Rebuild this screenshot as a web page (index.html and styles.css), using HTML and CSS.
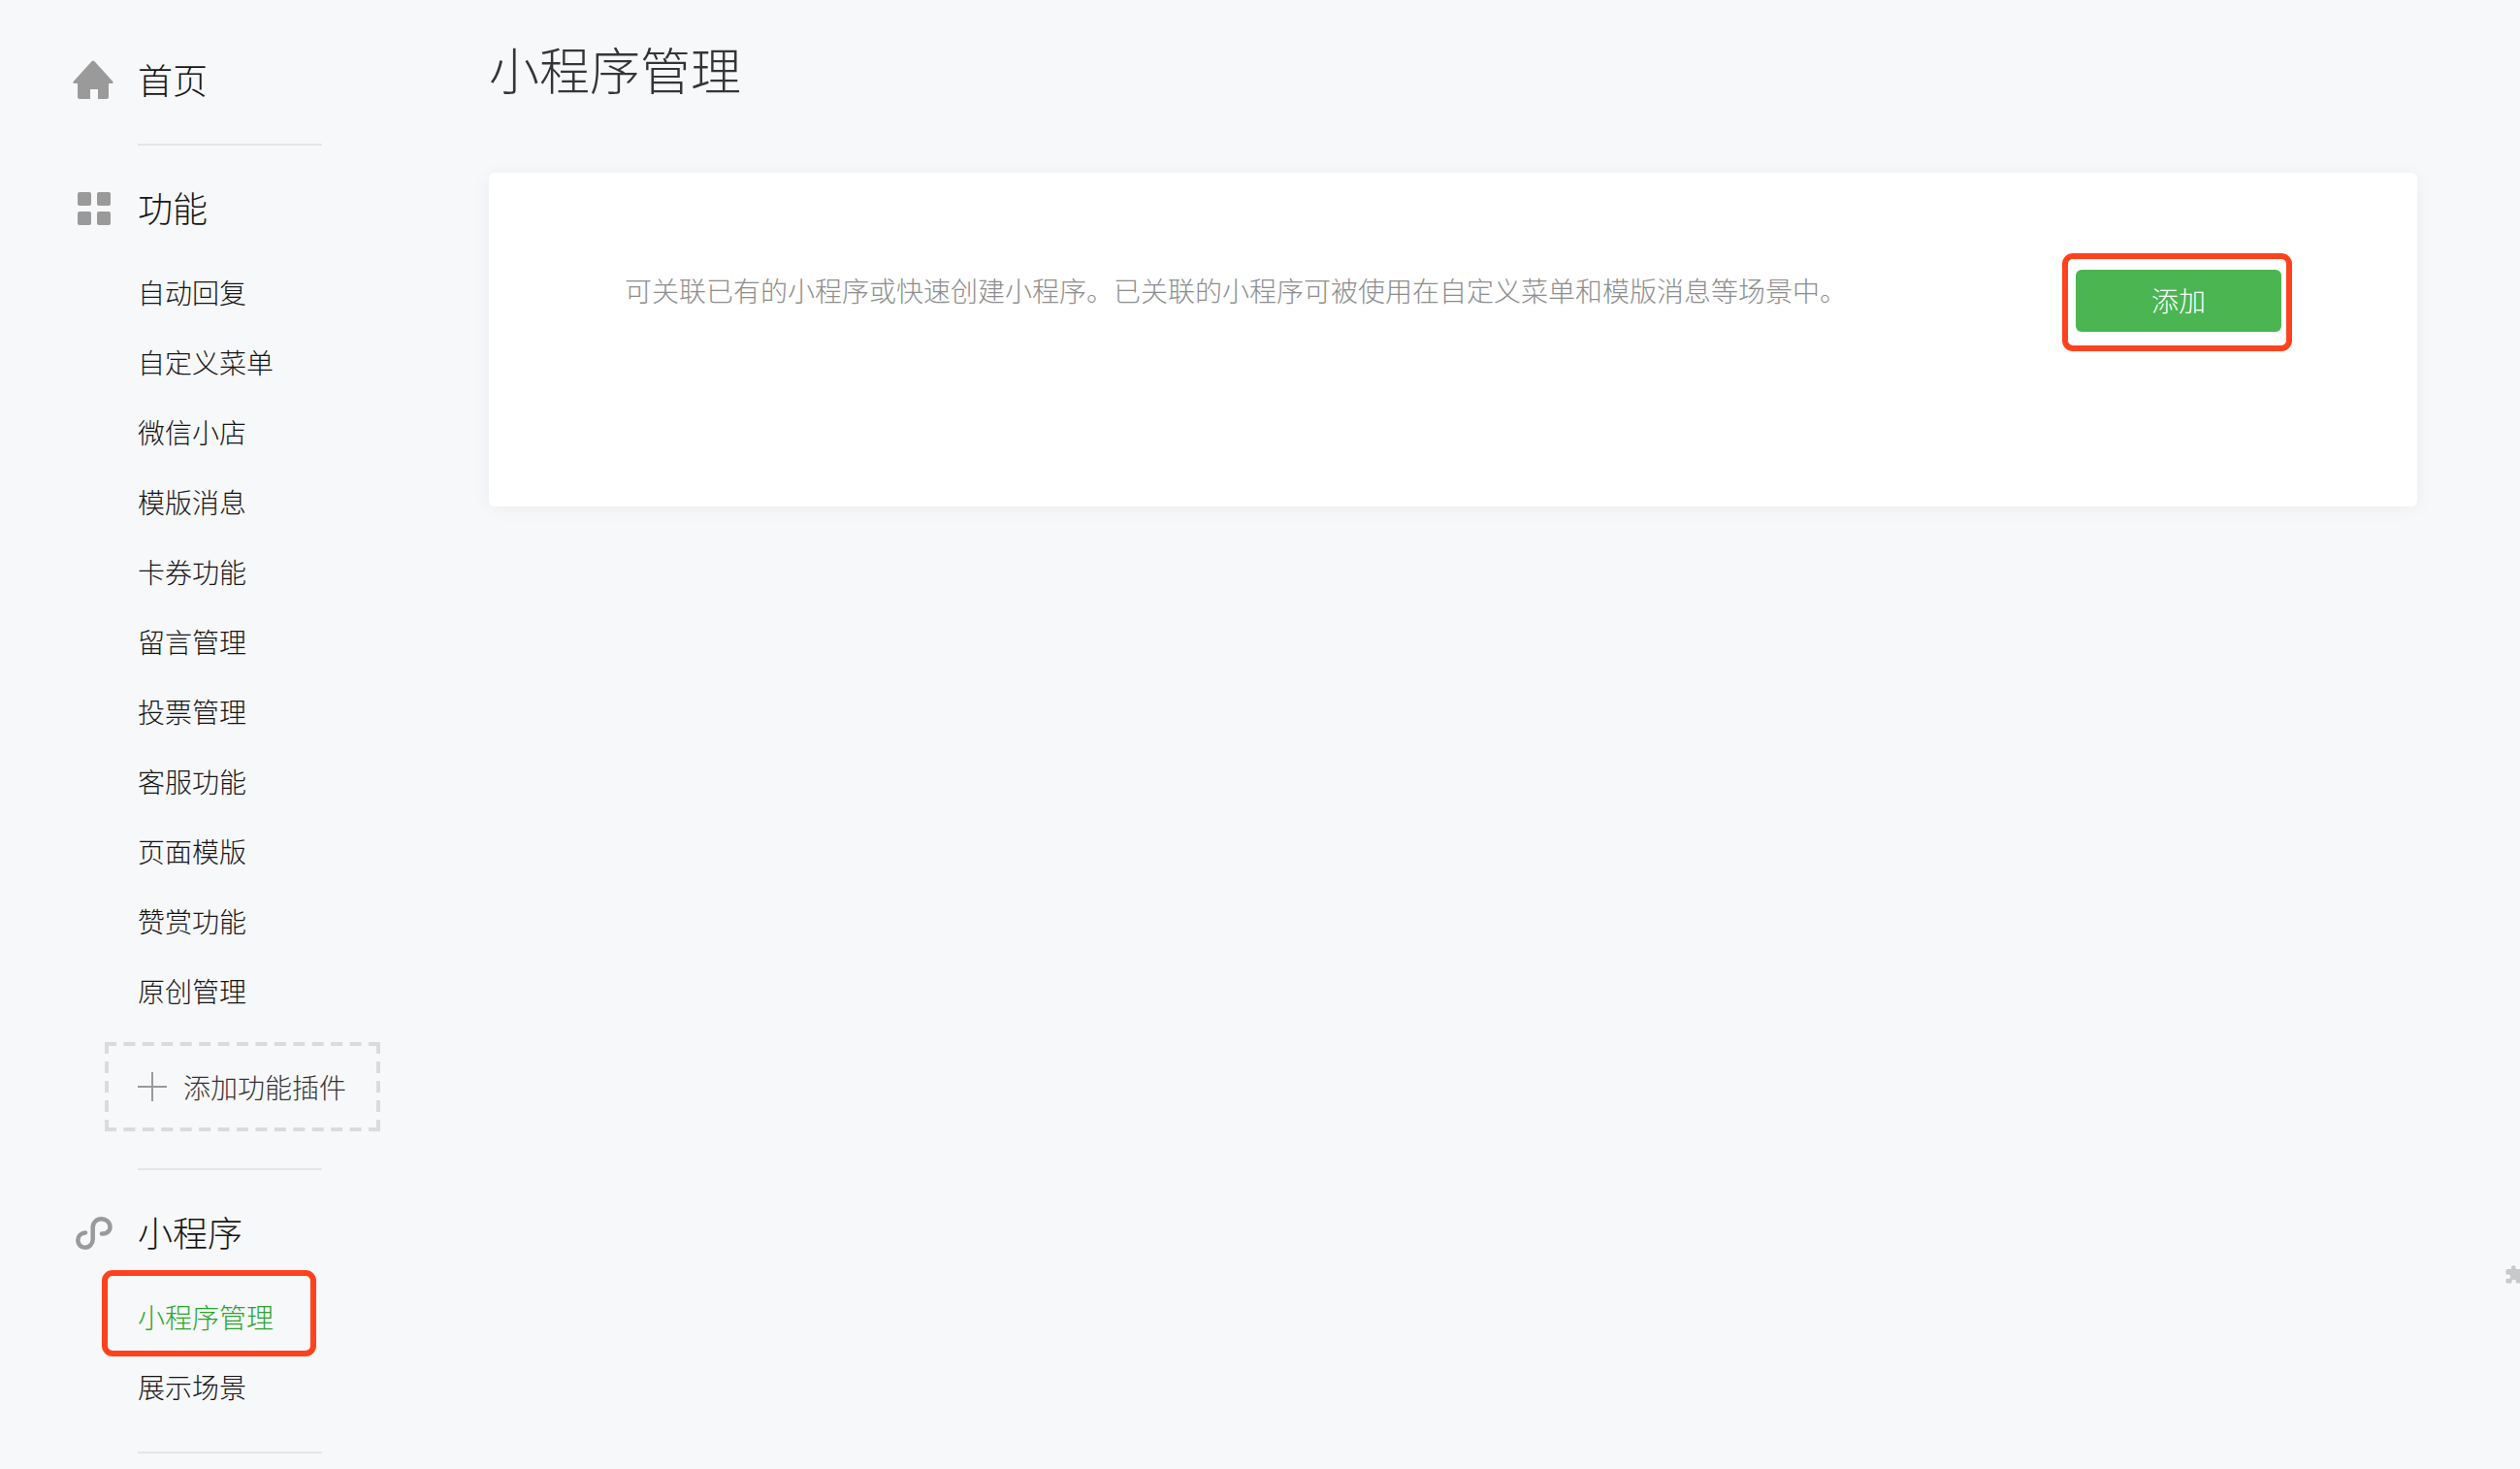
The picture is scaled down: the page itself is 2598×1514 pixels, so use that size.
FILE: index.html
```html
<!DOCTYPE html>
<html lang="zh-CN">
<head>
  <meta charset="utf-8">
  <meta name="viewport" content="width=device-width, initial-scale=1">
  <title>小程序管理</title>
  <link rel="stylesheet" href="styles.css">
</head>
<body>
  <div class="layout">
    <nav class="sidebar">
      <h2 class="menu-title">
        <svg class="menu-icon" viewBox="0 0 42 42" aria-hidden="true"><path fill="currentColor" d="M19.5 1.2q1.5-1.4 3 0L41.3 22q1 1.8-1 2H37v14q0 2-2 2h-9V30h-8v10H7q-2 0-2-2V24H1.700q-2-.2-1-2z"/></svg>
        <a href="#home">首页</a>
      </h2>
      <hr class="divider">
      <h2 class="menu-title">
        <svg class="menu-icon" viewBox="0 0 42 42" aria-hidden="true"><g fill="currentColor"><rect x="5" y="4" width="14" height="14" rx="2"/><rect x="25" y="4" width="14" height="14" rx="2"/><rect x="5" y="24" width="14" height="14" rx="2"/><rect x="25" y="24" width="14" height="14" rx="2"/></g></svg>
        功能
      </h2>
      <ul class="menu-list">
        <li><a href="#reply">自动回复</a></li>
        <li><a href="#menu">自定义菜单</a></li>
        <li><a href="#shop">微信小店</a></li>
        <li><a href="#template">模版消息</a></li>
        <li><a href="#coupon">卡券功能</a></li>
        <li><a href="#comment">留言管理</a></li>
        <li><a href="#vote">投票管理</a></li>
        <li><a href="#service">客服功能</a></li>
        <li><a href="#page">页面模版</a></li>
        <li><a href="#reward">赞赏功能</a></li>
        <li><a href="#original">原创管理</a></li>
      </ul>
      <a class="add-plugin" href="#plugins">
        <svg class="dashes" aria-hidden="true"><line class="dash-x" x1="0" y1="2" x2="100%" y2="2"/><line class="dash-x" x1="0" y1="90" x2="100%" y2="90"/><line class="dash-y" x1="2" y1="0" x2="2" y2="92"/><line class="dash-y" x1="282" y1="0" x2="282" y2="92"/></svg>
        <svg class="plus" viewBox="0 0 30 30" aria-hidden="true"><path d="M15 0v30M0 15h30" stroke="currentColor" stroke-width="2"/></svg>
        添加功能插件
      </a>
      <hr class="divider divider-after-box">
      <h2 class="menu-title">
        <svg class="menu-icon" viewBox="0 0 42 42" aria-hidden="true"><path fill="none" stroke="currentColor" stroke-width="4.500" stroke-linecap="round" d="M30 21.500C35 22 38.500 18.500 38.500 14.500C38.500 10 34.500 6.200 29.500 6.200C24.500 6.200 20.700 10 20.700 15V27C20.700 32 17 35.800 12.700 35.800C8.500 35.800 5.300 32.500 5.300 28.300C5.300 24 8.500 20.800 13 20.500"/></svg>
        小程序
      </h2>
      <ul class="menu-list">
        <li class="current"><a href="#miniprogram" aria-current="page">小程序管理</a></li>
        <li><a href="#scene">展示场景</a></li>
      </ul>
      <hr class="divider divider-last">
    </nav>
    <main class="content">
      <h1 class="page-title">小程序管理</h1>
      <section class="card">
        <p class="card-text">可关联已有的小程序或快速创建小程序。已关联的小程序可被使用在自定义菜单和模版消息等场景中。</p>
        <div class="action"><button class="add-button" type="button">添加</button></div>
      </section>
    </main>
  </div>
  <div class="edge-tool" aria-hidden="true">
    <svg class="puzzle" viewBox="0 0 20 20"><path fill="currentColor" d="M2 4h4V2.500a2.300 2.300 0 0 1 4.600 0V4H16v5h2v5h-2v4.500h-5V17a2.300 2.300 0 0 0-4.600 0v1.500H1.500q-1 0-1-1V14H3a2.300 2.300 0 0 0 0-4.600H.5V5.500Q.5 4 2 4z"/></svg>
  </div>
</body>
</html>
```
FILE: styles.css
```css
*,
*::before,
*::after {
  box-sizing: border-box;
}

body {
  margin: 0;
  background: #f7f8fa;
  color: #161616;
  font-family: "Noto Sans CJK SC", sans-serif;
  font-size: 28px;
  font-weight: 300;
}

a {
  color: inherit;
  text-decoration: none;
}

.layout {
  display: flex;
}

.sidebar {
  flex: none;
  width: 504px;
  padding: 53px 0 16px;
}

.menu-title {
  display: flex;
  align-items: flex-start;
  gap: 25px;
  margin: 0;
  padding: 0 0 4px 75px;
  font-size: 36px;
  font-weight: 300;
  line-height: 56px;
}

.menu-icon {
  width: 42px;
  height: 42px;
  margin-top: 9px;
  color: #9a9a9a;
}

.divider {
  width: 190px;
  height: 2px;
  margin: 35px 0 35px 142px;
  border: 0;
  background: #e4e5e7;
}

.divider-after-box {
  margin-top: 38px;
}

.divider-last {
  margin-top: 31px;
  margin-bottom: 0;
}

.menu-list {
  margin: 20px 0 0;
  padding: 0 0 0 142px;
  list-style: none;
  line-height: 72px;
}

.current {
  position: relative;
  color: #2ba52b;
}

.current::after {
  content: "";
  position: absolute;
  top: -12px;
  left: -37px;
  width: 221px;
  height: 89px;
  border: 6px solid #ff421d;
  border-radius: 11px;
  pointer-events: none;
}

.add-plugin {
  position: relative;
  display: flex;
  align-items: center;
  gap: 17px;
  width: 284px;
  height: 92px;
  margin: 17px 0 0 108px;
  padding-left: 34px;
  color: #353535;
}

.dashes {
  position: absolute;
  inset: 0;
  width: 100%;
  height: 100%;
  stroke: #dadbdc;
  stroke-width: 4;
}

.dash-x {
  stroke-dasharray: 12 7.430;
}

.dash-y {
  stroke-dasharray: 12 8;
}

.plus {
  width: 30px;
  height: 30px;
  color: #9a9a9a;
}

.content {
  flex: 1;
  min-width: 0;
  padding: 31px 106px 0 0;
}

.page-title {
  margin: 0;
  color: #353535;
  font-size: 52px;
  font-weight: 300;
  line-height: 80px;
}

.card {
  display: flex;
  align-items: flex-start;
  justify-content: space-between;
  gap: 40px;
  min-height: 344px;
  margin-top: 67px;
  padding: 100px 140px;
  background: #fff;
  border-radius: 6px;
  box-shadow: 0 2px 20px rgba(0, 0, 0, 0.05);
}

.card-text {
  margin: 0;
  color: #8d8d8d;
  line-height: 42px;
}

.action {
  position: relative;
  flex: none;
}

.action::after {
  content: "";
  position: absolute;
  top: -17px;
  left: -14px;
  width: 237px;
  height: 101px;
  border: 6px solid #ff421d;
  border-radius: 11px;
  pointer-events: none;
}

.add-button {
  display: block;
  width: 212px;
  height: 64px;
  padding: 0 0 2px;
  border: 0;
  border-radius: 6px;
  background: #4bb551;
  color: #fff;
  font: inherit;
  line-height: 62px;
}

.edge-tool {
  position: fixed;
  top: 1304px;
  right: 0;
  width: 15px;
  height: 20px;
  overflow: hidden;
}

.puzzle {
  display: block;
  width: 20px;
  height: 20px;
  color: #c8c9cb;
}
```
